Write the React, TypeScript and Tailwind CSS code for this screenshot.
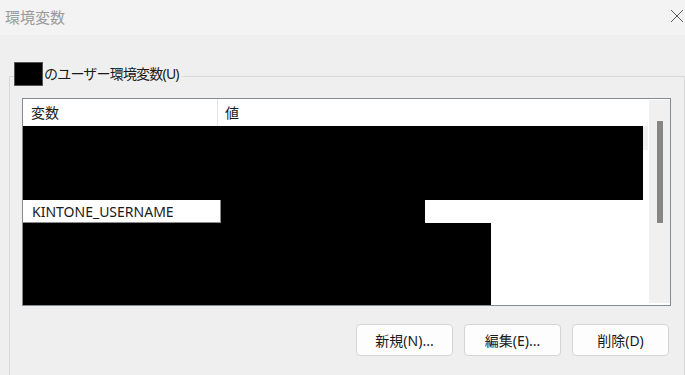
import React from 'react';

const font = "font-['Noto_Sans','Noto_Sans_CJK_JP',sans-serif]";

const DialogButton: React.FC<{ label: string }> = ({ label }) => (
  <button className="w-[97px] h-[32px] rounded-[4px] border border-[#d4d4d4] bg-[#fdfdfd] text-[14px] text-[#1a1a1a] flex items-center justify-center">
    {label}
  </button>
);

const App: React.FC = () => {
  return (
    <div className={`w-[685px] h-[375px] overflow-hidden bg-[#efefef] flex flex-col ${font}`}>
      {/* title bar */}
      <div className="h-[35px] bg-[#f3f3f3] flex items-center justify-between pl-[5px] pr-[1px] shrink-0">
        <span className="text-[15px] text-[#9a9a9a] leading-none">環境変数</span>
        <svg width="14" height="14" viewBox="0 0 14 14" className="mb-[3px]">
          <path d="M1 1L13 13M13 1L1 13" stroke="#5a5a5a" strokeWidth="1" />
        </svg>
      </div>

      {/* group box */}
      <div className="relative mt-[41px] ml-[9px] w-[676px] flex-1 border-t border-l border-r border-[#d9d9d9]">
        <div className="absolute -top-[15px] left-[4px] flex items-center bg-[#efefef] pr-[3px]">
          <div className="w-[29px] h-[24px] bg-black border border-[#555]" />
          <span className="text-[14px] text-[#1a1a1a] leading-none ml-[1px] tracking-[-0.8px]">のユーザー環境変数(U)</span>
        </div>

        {/* list */}
        <div className="mt-[21px] ml-[12px] w-[649px] h-[208px] border border-[#868a91] bg-white flex">
          <div className="flex-1 flex flex-col">
            <div className="h-[27px] flex text-[14px] text-[#1a1a1a] shrink-0">
              <div className="w-[195px] border-r border-[#e5e5e5] flex items-center pl-[8px]">変数</div>
              <div className="flex-1 flex items-center pl-[7px]">値</div>
            </div>
            <div className="flex h-[74px] shrink-0">
              <div className="w-[620px] bg-black" />
              <div className="w-[5px] h-[24px] bg-[#f0f0f0]" />
            </div>
            <div className="flex h-[23px] shrink-0">
              <div className="w-[198px] border-r border-b border-[#8a8a8a] flex items-center pl-[9px] text-[14px] text-[#1a1a1a]">
                KINTONE_USERNAME
              </div>
              <div className="w-[204px] bg-black" />
            </div>
            <div className="w-[468px] flex-1 bg-black" />
          </div>
          <div className="w-[21px] bg-[#f0f0f0] mt-[1px] mb-[2px] flex justify-center pt-[21px]">
            <div className="w-[6px] h-[102px] bg-[#868686]" />
          </div>
        </div>

        {/* buttons */}
        <div className="mt-[18px] pr-[15px] flex justify-end gap-[11px]">
          <DialogButton label="新規(N)..." />
          <DialogButton label="編集(E)..." />
          <DialogButton label="削除(D)" />
        </div>
      </div>
    </div>
  );
};

export default App;
